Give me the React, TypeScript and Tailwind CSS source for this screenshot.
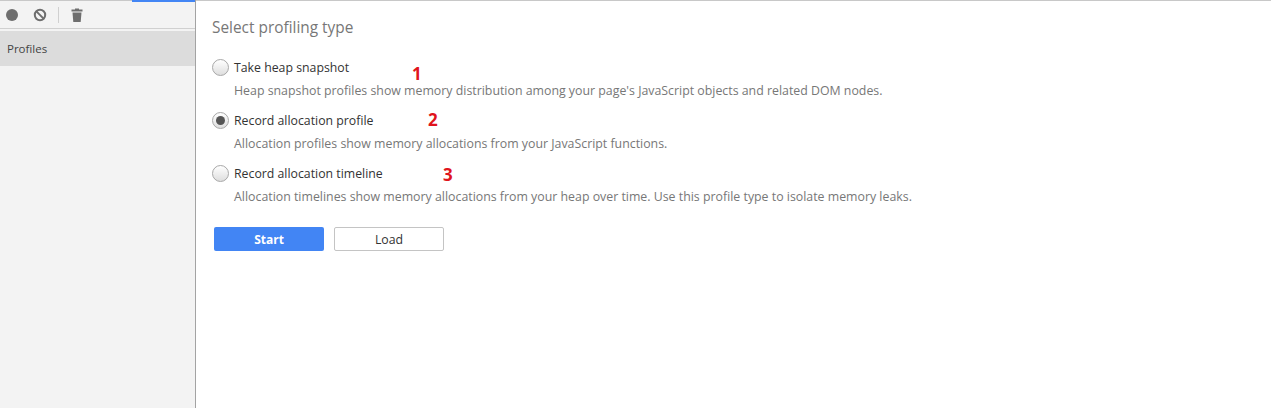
const options = [
  {
    title: 'Take heap snapshot',
    desc: "Heap snapshot profiles show memory distribution among your page's JavaScript objects and related DOM nodes.",
    num: '1',
    numClass: 'left-[200px] top-[9px]',
    checked: false,
  },
  {
    title: 'Record allocation profile',
    desc: 'Allocation profiles show memory allocations from your JavaScript functions.',
    num: '2',
    numClass: 'left-[216px] top-[2px]',
    checked: true,
  },
  {
    title: 'Record allocation timeline',
    desc: 'Allocation timelines show memory allocations from your heap over time. Use this profile type to isolate memory leaks.',
    num: '3',
    numClass: 'left-[231px] top-[4px]',
    checked: false,
  },
]

function Toolbar() {
  return (
    <div className="flex h-[28px] items-center border-b border-[#d0d0d0] bg-[#f3f3f3] pl-[5px]">
      <svg width="14" height="14" viewBox="0 0 14 14">
        <circle cx="7" cy="7" r="6" fill="#6e6e6e" />
      </svg>
      <svg width="14" height="14" viewBox="0 0 14 14" className="ml-[14px]">
        <circle cx="7" cy="7" r="5.2" fill="none" stroke="#6e6e6e" strokeWidth="2" />
        <path d="M3.4 3.4 10.6 10.6" stroke="#6e6e6e" strokeWidth="2" />
      </svg>
      <div className="ml-[11px] h-[16px] w-px bg-[#d0d0d0]" />
      <svg width="12" height="14" viewBox="0 0 12 14" className="ml-[12px]">
        <path d="M4 0.5h4v1h3.5v2H.5v-2H4z" fill="#6e6e6e" />
        <path d="M1.5 4.5h9L9.7 14H2.3z" fill="#6e6e6e" />
      </svg>
    </div>
  )
}

export default function App() {
  return (
    <div className="flex h-[408px] w-[1271px] overflow-hidden bg-white font-['Open_Sans','Liberation_Sans',sans-serif]">
      <aside className="w-[196px] shrink-0 border-r border-[#a3a3a3] bg-[#f3f3f3]">
        <div className="relative h-px bg-[#c8c8c8]">
          <div className="absolute left-[132px] top-0 h-[2px] w-[63px] bg-[#4285f4]" />
        </div>
        <Toolbar />
        <div className="mt-[2px] flex h-[35px] items-center bg-[#dcdcdc] pl-[7px] text-[11.5px] text-[#444]">
          Profiles
        </div>
      </aside>
      <main className="flex-1 border-t border-[#c8c8c8] pl-[16px] pt-[16px]">
        <h1 className="text-[15.4px] leading-[22px] text-[#777]">Select profiling type</h1>
        <div className="mt-[19px] flex flex-col gap-[10px]">
          {options.map((o) => (
            <div key={o.title} className="relative">
              <div className="flex h-[20px] items-center">
                <span className="mb-[2px] flex size-[17px] items-center justify-center rounded-full border border-[#a8a8a8] bg-gradient-to-b from-white to-[#dedede]">
                  {o.checked && <span className="size-[9px] rounded-full bg-[#555]" />}
                </span>
                <span className="ml-[5px] text-[12.3px] text-[#333]">{o.title}</span>
              </div>
              <p className="mt-[3px] pl-[22px] text-[12.35px] leading-[20px] text-[#777]">{o.desc}</p>
              <span className={`absolute text-[17px] leading-[13px] font-bold text-[#e0141c] ${o.numClass}`}>{o.num}</span>
            </div>
          ))}
        </div>
        <div className="mt-[20px] ml-[2px] flex gap-[10px]">
          <button className="h-[24px] w-[110px] rounded-[2px] bg-[#4285f4] pt-px text-[12px] font-bold text-white">
            Start
          </button>
          <button className="h-[24px] w-[110px] rounded-[2px] border border-[#c4c4c4] bg-white pt-[2px] text-[12.3px] text-[#333]">
            Load
          </button>
        </div>
      </main>
    </div>
  )
}
